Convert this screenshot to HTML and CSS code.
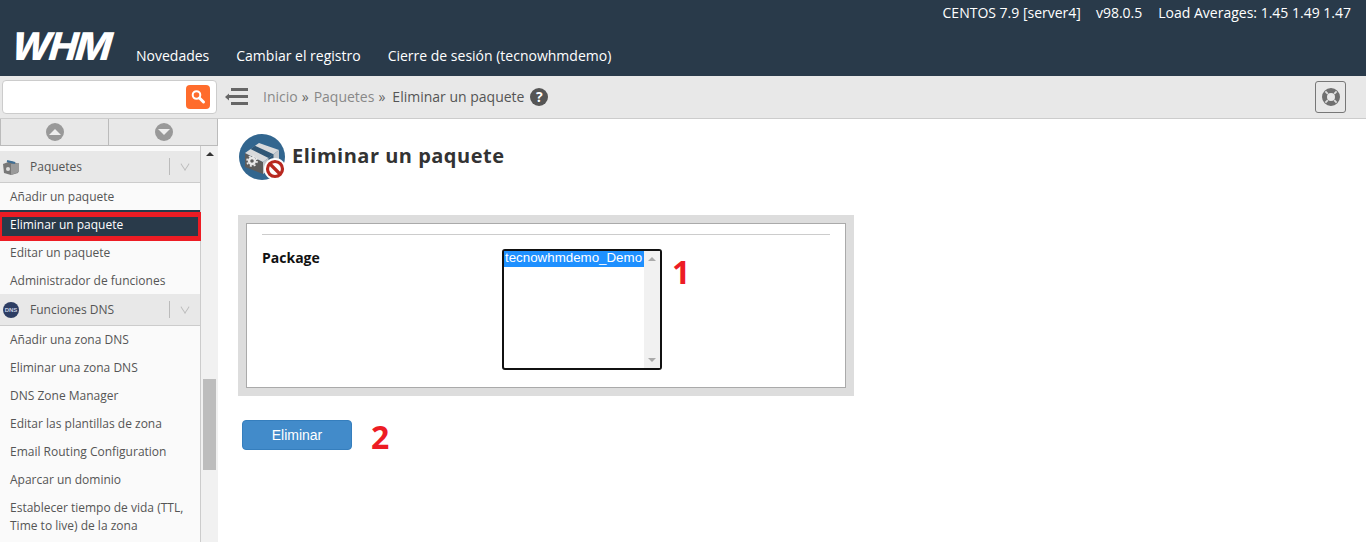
FILE: index.html
```html
<!DOCTYPE html>
<html lang="en">
<head>
    <meta charset="UTF-8">
    <meta name="viewport" content="width=device-width, initial-scale=1.0">
    <title>Eliminar un paquete</title>
    <link rel="stylesheet" href="styles.css">
</head>
<body>
    <header class="top-header">
        <div class="server-info">
            <span>CENTOS 7.9 [server4]</span>
            <span class="server-version">v98.0.5</span>
            <span>Load Averages: 1.45 1.49 1.47</span>
        </div>
        <div class="brand-row">
            <div class="logo-cell"><span class="logo">WHM</span></div>
            <nav class="top-nav">
                <a href="#">Novedades</a>
                <a href="#">Cambiar el registro</a>
                <a href="#">Cierre de sesión (tecnowhmdemo)</a>
            </nav>
        </div>
    </header>

    <div class="toolbar">
        <div class="search-box">
            <button type="button" class="search-button" aria-label="Buscar">
                <svg width="16" height="16" viewBox="0 0 16 16">
                    <circle cx="6.5" cy="6" r="3.8" fill="none" stroke="#fff" stroke-width="2"/>
                    <path d="M9.5 9l4 4" stroke="#fff" stroke-width="3" stroke-linecap="round"/>
                </svg>
            </button>
        </div>
        <svg class="menu-toggle" width="24" height="18" viewBox="0 0 24 18">
            <path d="M0 9l4-3.500v7z" fill="#666"/>
            <rect x="6" y="0" width="17" height="3" fill="#666"/>
            <rect x="4" y="7" width="19" height="3" fill="#666"/>
            <rect x="6" y="14" width="17" height="3" fill="#666"/>
        </svg>
        <div class="breadcrumb">
            <a href="#">Inicio</a><span class="sep">»</span>
            <a href="#">Paquetes</a><span class="sep">»</span>
            <span class="current">Eliminar un paquete</span>
            <span class="help-dot">?</span>
        </div>
        <button type="button" class="support-button" aria-label="Soporte">
            <svg width="20" height="20" viewBox="0 0 20 20">
                <circle cx="10" cy="10" r="6.500" fill="none" stroke="#707070" stroke-width="5"/>
                <path d="M4.400 4.400l2.400 2.400M15.600 4.400l-2.400 2.400M4.400 15.600l2.400-2.400M15.600 15.600l-2.400-2.400" stroke="#ddd" stroke-width="1.800"/>
            </svg>
        </button>
    </div>

    <div class="page-body">
        <aside class="sidebar">
            <div class="scroll-arrows">
                <div class="arrow-cell"><span class="arrow-circle"><span class="tri-up"></span></span></div>
                <div class="arrow-cell"><span class="arrow-circle"><span class="tri-down"></span></span></div>
            </div>
            <div class="sidebar-scroll">
                <div class="sidebar-list">
                    <div class="group-title">
                        <svg class="group-icon" width="18" height="18" viewBox="0 0 18 18">
                            <path d="M1 6l8-3 8 3-1 9-7 2-7-2z" fill="#777"/>
                            <path d="M9 6l8-1v9l-8 3z" fill="#9a9a9a"/>
                            <path d="M5 3l8 2" stroke="#3f6f96" stroke-width="2"/>
                            <circle cx="6" cy="11" r="2" fill="#ddd"/>
                        </svg>
                        <span class="group-name">Paquetes</span>
                        <span class="group-caret"></span>
                    </div>
                    <a class="side-link" href="#">Añadir un paquete</a>
                    <a class="side-link active" href="#">Eliminar un paquete</a>
                    <a class="side-link" href="#">Editar un paquete</a>
                    <a class="side-link" href="#">Administrador de funciones</a>
                    <div class="group-title second">
                        <svg class="group-icon" width="18" height="18" viewBox="0 0 18 18">
                            <circle cx="9" cy="9" r="8" fill="#2d3d63"/>
                            <text class="dns-mark" x="9" y="11">DNS</text>
                        </svg>
                        <span class="group-name">Funciones DNS</span>
                        <span class="group-caret"></span>
                    </div>
                    <a class="side-link" href="#">Añadir una zona DNS</a>
                    <a class="side-link" href="#">Eliminar una zona DNS</a>
                    <a class="side-link" href="#">DNS Zone Manager</a>
                    <a class="side-link" href="#">Editar las plantillas de zona</a>
                    <a class="side-link" href="#">Email Routing Configuration</a>
                    <a class="side-link" href="#">Aparcar un dominio</a>
                    <a class="side-link" href="#">Establecer tiempo de vida (TTL, Time to live) de la zona</a>
                </div>
                <div class="side-scrollbar">
                    <span class="bar-up"></span>
                    <span class="bar-thumb"></span>
                </div>
            </div>
        </aside>

        <main class="content">
            <div class="page-title">
                <svg class="page-icon" width="48" height="48" viewBox="0 0 48 48">
                    <circle cx="23" cy="23" r="23" fill="#32668f"/>
                    <path d="M6 19l18 9v12L6 33z" fill="#5c5c5c"/>
                    <path d="M24 28l16-12v14l-16 10z" fill="#c4c8cc"/>
                    <path d="M6 19l14-10 20 7-16 12z" fill="#d8dadc"/>
                    <path d="M11.500 15l4.500-3.200 18.500 8.400-5 3.800z" fill="#2f5675"/>
                    <path d="M29.500 24l5-3.800v13.600l-5 3z" fill="#2f5675"/>
                    <circle cx="13" cy="27" r="3" fill="none" stroke="#e8e8e8" stroke-width="2.400"/>
                    <circle cx="13" cy="27" r="5" fill="none" stroke="#e8e8e8" stroke-width="1.600" stroke-dasharray="2 1.930"/>
                    <circle cx="36" cy="35" r="11" fill="#fff"/>
                    <circle cx="36" cy="35" r="7.500" fill="#fff" stroke="#b8281f" stroke-width="3.200"/>
                    <path d="M31 30l10 10" stroke="#b8281f" stroke-width="3.200"/>
                </svg>
                <h1>Eliminar un paquete</h1>
            </div>

            <form class="package-form">
                <div class="panel-outer">
                    <div class="panel-inner">
                        <hr class="panel-rule">
                        <div class="form-row">
                            <label class="form-label">Package</label>
                            <div class="list-box">
                                <div class="list-options">
                                    <div class="list-option">tecnowhmdemo_Demo</div>
                                </div>
                                <div class="list-scrollbar">
                                    <span class="bar-up"></span>
                                    <span class="bar-down"></span>
                                </div>
                            </div>
                            <span class="step-number step-one">1</span>
                        </div>
                    </div>
                </div>
                <div class="form-actions">
                    <button type="button" class="delete-button">Eliminar</button>
                    <span class="step-number step-two">2</span>
                </div>
            </form>
        </main>
    </div>
</body>
</html>
```

FILE: styles.css
```css
html, body {
    height: 100%;
}
body {
    margin: 0;
    height: 100vh;
    overflow: hidden;
    font-family: "Open Sans", sans-serif;
    font-size: 14px;
    background-color: #fff;
    color: #333;
}
a {
    text-decoration: none;
    color: inherit;
}

/* header */
.top-header {
    height: 76px;
    background-color: #293a4a;
    color: #fff;
}
.server-info {
    display: flex;
    justify-content: flex-end;
    gap: 15px;
    height: 27px;
    padding-right: 15px;
    line-height: 26px;
}
.server-version {
    margin-right: 1px;
}
.brand-row {
    display: flex;
    height: 49px;
}
.logo-cell {
    width: 136px;
    padding-left: 12px;
    box-sizing: border-box;
}
.logo {
    display: inline-block;
    font-family: "Inter", sans-serif;
    font-size: 38px;
    font-weight: 800;
    line-height: 38px;
    letter-spacing: -2px;
    transform: skewX(-16deg);
}
.top-nav {
    display: flex;
    gap: 27px;
    line-height: 58px;
}

/* toolbar */
.toolbar {
    display: flex;
    align-items: center;
    height: 42px;
    background-color: #e8e8e8;
    border-bottom: 1px solid #ccc;
}
.search-box {
    display: flex;
    align-items: center;
    justify-content: flex-end;
    box-sizing: border-box;
    width: 215px;
    height: 34px;
    margin-left: 2px;
    padding-right: 6px;
    background-color: #fff;
    border: 1px solid #ccc;
    border-radius: 4px;
}
.search-button {
    display: flex;
    align-items: center;
    justify-content: center;
    width: 24px;
    height: 24px;
    padding: 0;
    background-color: #ff6c2c;
    border: none;
    border-radius: 4px;
}
.menu-toggle {
    margin-left: 8px;
}
.breadcrumb {
    display: flex;
    align-items: center;
    margin-left: 14px;
    color: #888;
}
.breadcrumb a, .breadcrumb .sep, .breadcrumb .current {
    margin-bottom: 2px;
}
.breadcrumb .sep {
    margin-left: 4px;
    margin-right: 5px;
    color: #666;
}
.breadcrumb .current {
    margin-left: 2px;
    color: #555;
}
.help-dot {
    width: 18px;
    height: 18px;
    margin-left: 6px;
    border-radius: 50%;
    background-color: #555;
    color: #fff;
    font-size: 14px;
    font-weight: bold;
    line-height: 18px;
    text-align: center;
}
.support-button {
    display: flex;
    align-items: center;
    justify-content: center;
    width: 31px;
    height: 32px;
    margin-left: auto;
    margin-right: 20px;
    padding: 0;
    background-color: #e8e8e8;
    border: 1px solid #777;
    border-radius: 3px;
}

/* sidebar */
.page-body {
    display: flex;
    height: calc(100vh - 119px);
}
.sidebar {
    width: 218px;
    flex-shrink: 0;
    overflow: hidden;
}
.scroll-arrows {
    display: flex;
    height: 26px;
    background-color: #e8e8e8;
    border-bottom: 1px solid #bbb;
    border-left: 1px solid #bbb;
}
.arrow-cell {
    display: flex;
    align-items: center;
    justify-content: center;
    flex: 1;
    border-right: 1px solid #bbb;
}
.arrow-cell + .arrow-cell {
    padding-left: 1px;
}
.arrow-circle {
    display: flex;
    align-items: center;
    justify-content: center;
    width: 18px;
    height: 18px;
    border-radius: 50%;
    background-color: #999;
}
.tri-up {
    border-left: 6px solid transparent;
    border-right: 6px solid transparent;
    border-bottom: 6px solid #eee;
}
.tri-down {
    border-left: 6px solid transparent;
    border-right: 6px solid transparent;
    border-top: 6px solid #eee;
}
.sidebar-scroll {
    display: flex;
    height: 400px;
}
.sidebar-list {
    flex-shrink: 0;
    padding-top: 5px;
    box-sizing: border-box;
    background-color: #fafafa;
    border-right: 1px solid #ccc;
    width: 201px;
    font-size: 12px;
    color: #555;
}
.group-title {
    display: flex;
    align-items: center;
    box-sizing: border-box;
    height: 32px;
    background-color: #e8e8e8;
    border-bottom: 1px solid #ccc;
}
.group-title.second {
    margin-top: -1px;
}
.group-icon {
    margin-left: 2px;
}
.dns-mark {
    fill: #c5cde0;
    font-family: "Liberation Sans", sans-serif;
    font-size: 6px;
    font-weight: bold;
    text-anchor: middle;
}
.group-name {
    margin-left: 10px;
    color: #555;
}
.group-caret {
    position: relative;
    width: 22px;
    height: 17px;
    margin-left: auto;
    margin-right: 8px;
    border-left: 1px solid #bbb;
}
.group-caret::after {
    content: "";
    position: absolute;
    left: 11px;
    top: 2px;
    width: 7px;
    height: 7px;
    border-right: 1px solid #bbb;
    border-bottom: 1px solid #bbb;
    transform: rotate(45deg) skew(12deg, 12deg);
}
.side-link {
    display: block;
    padding: 5px 10px;
    line-height: 18px;
}
.side-link.active {
    position: relative;
    background-color: #293a4a;
    box-shadow: 0 -1px 0 #293a4a;
    color: #fff;
}
.side-link.active::after {
    content: "";
    position: absolute;
    left: 0;
    top: 1px;
    width: 203px;
    height: 29px;
    box-sizing: border-box;
    border: 5px solid #ed1c24;
    border-left-width: 2px;
}
.side-scrollbar {
    position: relative;
    flex: 1;
    background-color: #f1f1f1;
}
.side-scrollbar .bar-up {
    position: absolute;
    left: 5px;
    top: 6px;
}
.bar-up {
    display: block;
    width: 0;
    border-left: 4px solid transparent;
    border-right: 4px solid transparent;
    border-bottom: 4px solid #333;
}
.bar-thumb {
    position: absolute;
    left: 2px;
    right: 2px;
    top: 233px;
    height: 91px;
    background-color: #bdbdbd;
}

/* main */
.content {
    flex: 1;
    padding: 15px 0 0 20px;
}
.page-title {
    display: flex;
    align-items: center;
    gap: 5px;
    height: 48px;
}
.page-icon {
    margin-left: 1px;
}
.page-title h1 {
    margin: 0 0 6px;
    font-size: 20px;
    font-weight: bold;
    letter-spacing: 0.5px;
    color: #333;
}
.package-form {
    margin-top: 33px;
}
.panel-outer {
    width: 600px;
    padding: 8px;
    background-color: #ddd;
}
.panel-inner {
    box-sizing: border-box;
    height: 165px;
    padding: 10px 15px 0;
    background-color: #fff;
    border: 1px solid #aaa;
}
.panel-rule {
    margin: 0 0 14px;
    border: none;
    border-top: 1px solid #ccc;
}
.form-row {
    display: flex;
    align-items: flex-start;
}
.form-label {
    width: 240px;
    font-weight: bold;
    color: #111;
    line-height: 18px;
}
.list-box {
    display: flex;
    box-sizing: border-box;
    width: 160px;
    height: 121px;
    background-color: #fff;
    border: 2px solid #111;
    border-radius: 3px;
}
.list-options {
    flex: 1;
}
.list-option {
    height: 16px;
    padding-left: 1px;
    background-color: #1e90ff;
    color: #fff;
    font-family: "Liberation Sans", sans-serif;
    font-size: 13.33px;
    line-height: 14px;
    white-space: nowrap;
}
.list-scrollbar {
    display: flex;
    flex-direction: column;
    justify-content: space-between;
    align-items: center;
    box-sizing: border-box;
    width: 16px;
    padding: 6px 0;
    background-color: #f1f1f1;
}
.list-scrollbar .bar-up {
    border-bottom-color: #aaa;
}
.bar-down {
    display: block;
    width: 0;
    border-left: 4px solid transparent;
    border-right: 4px solid transparent;
    border-top: 4px solid #aaa;
}
.step-number {
    font-size: 32px;
    font-weight: bold;
    line-height: 40px;
    color: #ed1c24;
}
.step-one {
    margin: 3px 0 0 10px;
}
.step-two {
    margin-top: 3px;
}
.form-actions {
    display: flex;
    align-items: center;
    gap: 19px;
    height: 30px;
    margin: 24px 0 0 4px;
}
.delete-button {
    width: 110px;
    height: 30px;
    padding: 0;
    background-color: #428bca;
    border: 1px solid #357ebd;
    border-radius: 4px;
    color: #fff;
    font-family: "Liberation Sans", sans-serif;
    font-size: 14px;
}
```
